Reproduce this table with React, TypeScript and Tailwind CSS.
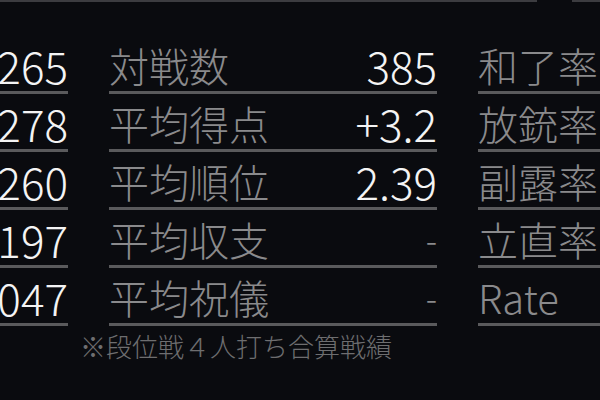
const FONT = "font-['Noto_Sans_CJK_JP','Noto_Sans',sans-serif]";

type Stat = { label: string; value: string };

// 4人打ち段位戦の成績 (左の列は画面外にはみ出している)
const columns: Stat[][] = [
  [
    { label: '1位率', value: '0.265' },
    { label: '2位率', value: '0.278' },
    { label: '3位率', value: '0.260' },
    { label: '4位率', value: '0.197' },
    { label: '飛び率', value: '0.047' },
  ],
  [
    { label: '対戦数', value: '385' },
    { label: '平均得点', value: '+3.2' },
    { label: '平均順位', value: '2.39' },
    { label: '平均収支', value: '-' },
    { label: '平均祝儀', value: '-' },
  ],
  [
    { label: '和了率', value: '' },
    { label: '放銃率', value: '' },
    { label: '副露率', value: '' },
    { label: '立直率', value: '' },
    { label: 'Rate', value: '' },
  ],
];

function StatRow({ stat }: { stat: Stat }) {
  const dim = stat.value === '-';
  return (
    <div className="flex h-[58px] items-center justify-between border-b-[3px] border-[#5a5a5c] pt-[3px]">
      <span className="text-[40px] font-light leading-none text-[#8a8a8c] whitespace-nowrap">{stat.label}</span>
      <span
        className={`font-light leading-none whitespace-nowrap ${dim ? 'text-[#8a8a8c] text-[34px]' : 'text-[44px] text-[#f4f4f4]'}`}
      >
        {stat.value}
      </span>
    </div>
  );
}

export default function App() {
  return (
    <div className={`relative w-[600px] h-[400px] overflow-hidden bg-[#0a0b0f] ${FONT}`}>
      {/* top border of the panel */}
      <div className="flex h-[2px]">
        <div className="w-[537px] bg-[#3c3c40]" />
        <div className="w-[35px]" />
        <div className="flex-1 bg-[#3c3c40]" />
      </div>

      <div className="ml-[-260px] mt-[34px] flex gap-[41px]">
        {columns.map((col, i) => (
          <div key={i} className="w-[328px] shrink-0">
            {col.map((s) => (
              <StatRow key={s.label} stat={s} />
            ))}
          </div>
        ))}
      </div>

      <div className="pl-[80px] pt-[7px] text-[26px] font-light leading-none text-[#6e6e70] whitespace-nowrap">
        ※段位戦４人打ち合算戦績
      </div>
    </div>
  );
}
